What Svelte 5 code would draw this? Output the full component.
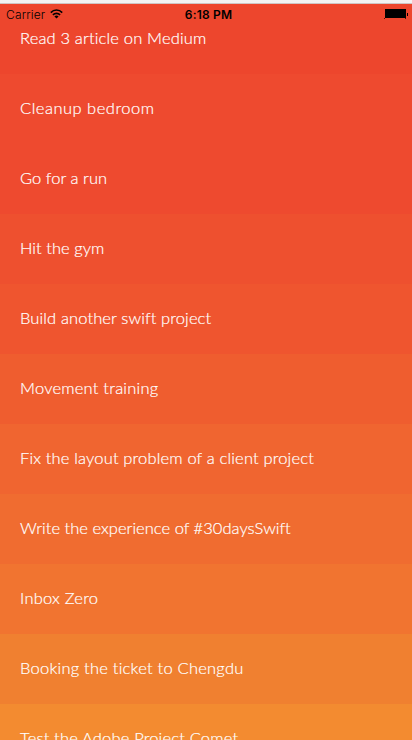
<script>
  const tasks = [
    { title: 'Read 3 article on Medium', color: '#ed462d', spacing: 0.16 },
    { title: 'Cleanup bedroom', color: '#ee4a2f', spacing: 0.5 },
    { title: 'Go for a run', color: '#ee4a2f', spacing: 0.05 },
    { title: 'Hit the gym', color: '#ee502f', spacing: 0.03 },
    { title: 'Build another swift project', color: '#ef552f', spacing: 0.12 },
    { title: 'Movement training', color: '#ef5d2f', spacing: 0.22 },
    { title: 'Fix the layout problem of a client project', color: '#f06530', spacing: 0.16 },
    { title: 'Write the experience of #30daysSwift', color: '#f06c30', spacing: 0.03 },
    { title: 'Inbox Zero', color: '#f17430', spacing: 0.22 },
    { title: 'Booking the ticket to Chengdu', color: '#f08030', spacing: 0.23 },
    { title: 'Test the Adobe Project Comet', color: '#f38b30', spacing: 0.17 }
  ];
</script>

<main class="screen">
  <header class="status">
    <div class="carrier">
      <span class="label">Carrier</span>
      <svg width="13" height="10" viewBox="0 0 13 10" fill="none" stroke="#000" stroke-width="1.6">
        <path d="M0.8 3.6C4 0.2 9 0.2 12.2 3.6M2.9 5.9C5 3.8 8 3.8 10.1 5.9" />
        <path d="M4.4 7.5Q6.5 5.7 8.6 7.5L6.5 9.6Z" fill="#000" stroke="none" />
      </svg>
    </div>
    <span class="label clock">6:18 PM</span>
    <svg class="battery" width="24" height="10" viewBox="0 0 24 10">
      <path d="M1 0H22V9H1Z" />
      <path d="M0 1H1V0H2V9H1V10H0V9H1V1ZM21 9H22V10H21Z" fill-opacity="0.7" />
      <path d="M23 4H24V7H23Z" />
    </svg>
  </header>
  <ul class="list">
    {#each tasks as task}
      <li style:background-color={task.color}>
        <span style:letter-spacing="{task.spacing}px">{task.title}</span>
      </li>
    {/each}
  </ul>
</main>

<style>
  .screen {
    position: relative;
    box-sizing: border-box;
    height: 740px;
    overflow: hidden;
    border-top: 3px solid #f3f3f3;
    background: #f38b30;
  }
  .status {
    position: absolute;
    inset: 0 0 auto;
    z-index: 1;
    display: grid;
    grid-template-columns: 1fr auto 1fr;
    align-items: center;
    height: 22px;
    padding: 0 4px 0 6px;
    font: 12px/20px Inter, "Liberation Sans", sans-serif;
    color: #000;
  }
  .label {
    padding-top: 2px;
  }
  .carrier {
    display: flex;
    align-items: center;
    gap: 5px;
    font-weight: 300;
    letter-spacing: 0.15px;
  }
  .clock {
    display: block;
    padding-left: 3px;
    font-weight: 600;
    letter-spacing: 0.2px;
  }
  .battery {
    justify-self: end;
  }
  .list {
    margin: 0;
    padding: 0;
    list-style: none;
    border-top: 1px solid #cfc5c4;
  }
  li {
    display: flex;
    align-items: center;
    box-sizing: border-box;
    height: 70px;
    padding: 0 0 2px 20px;
    font-family: Lato, "Open Sans", sans-serif;
    font-size: 16.5px;
    font-weight: 300;
    line-height: 24px;
    color: #fff;
    -webkit-text-stroke: 0.2px #fff;
    white-space: nowrap;
  }
</style>
